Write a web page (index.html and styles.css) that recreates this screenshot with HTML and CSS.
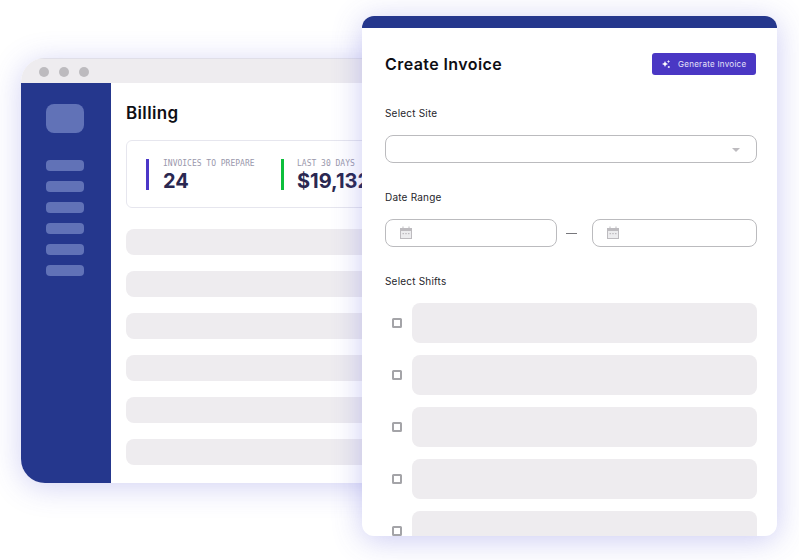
FILE: index.html
```html
<!DOCTYPE html>
<html lang="en">
<head>
<meta charset="utf-8">
<title>Create Invoice</title>
<link rel="stylesheet" href="styles.css">
</head>
<body>
<div class="canvas">
  <section class="billing-window">
    <div class="titlebar"><span class="dot"></span><span class="dot"></span><span class="dot"></span></div>
    <div class="billing-body">
      <nav class="sidebar">
        <div class="logo"></div>
        <div class="nav-list">
          <span class="nav-item"></span><span class="nav-item"></span><span class="nav-item"></span>
          <span class="nav-item"></span><span class="nav-item"></span><span class="nav-item"></span>
        </div>
      </nav>
      <main class="billing-main">
        <h2 class="billing-title">Billing</h2>
        <div class="stats">
          <div class="stat stat-purple">
            <div class="stat-label">INVOICES TO PREPARE</div>
            <div class="stat-value">24</div>
          </div>
          <div class="stat stat-green">
            <div class="stat-label">LAST 30 DAYS</div>
            <div class="stat-value">$19,132</div>
          </div>
        </div>
        <div class="billing-rows">
          <div class="billing-row"></div><div class="billing-row"></div><div class="billing-row"></div>
          <div class="billing-row"></div><div class="billing-row"></div><div class="billing-row"></div>
        </div>
      </main>
    </div>
  </section>

  <section class="invoice-window">
    <div class="invoice-top"></div>
    <div class="invoice-content">
      <header class="invoice-header">
        <h1 class="invoice-title">Create Invoice</h1>
        <div class="generate-btn">
          <svg class="spark" viewBox="0 0 10 10" width="10" height="10"><path d="M4 2 L4.9 4.1 L7 5 L4.9 5.9 L4 8 L3.1 5.9 L1 5 L3.100 4.100 Z" fill="#fff"/><path d="M7.500 .8 L8 2 L9.200 2.500 L8 3 L7.500 4.200 L7 3 L5.800 2.500 L7 2 Z" fill="#e6e3fa"/><circle cx="7.800" cy="8" r="1.100" fill="#e6e3fa"/></svg>
          <span>Generate Invoice</span>
        </div>
      </header>

      <div class="field-label label-site">Select Site</div>
      <div class="select-box"><span class="caret"></span></div>

      <div class="field-label label-date">Date Range</div>
      <div class="date-row">
        <div class="date-input date-first">
          <svg class="calendar" viewBox="0 0 12 13" width="12" height="13"><path d="M0 2 H2.500 V0.500 H3.500 V2 H8.500 V0.500 H9.500 V2 H12 V13 H0 Z" fill="#bdbbbf"/><rect x="1" y="5" width="10" height="7" fill="#ececee"/><rect x="2.500" y="7" width="1.500" height="1.200" fill="#bdbbbf"/><rect x="5.250" y="7" width="1.500" height="1.200" fill="#bdbbbf"/><rect x="8" y="7" width="1.500" height="1.200" fill="#bdbbbf"/></svg>
        </div>
        <span class="date-dash"></span>
        <div class="date-input date-second">
          <svg class="calendar" viewBox="0 0 12 13" width="12" height="13"><path d="M0 2 H2.500 V0.500 H3.500 V2 H8.500 V0.500 H9.500 V2 H12 V13 H0 Z" fill="#bdbbbf"/><rect x="1" y="5" width="10" height="7" fill="#ececee"/><rect x="2.500" y="7" width="1.500" height="1.200" fill="#bdbbbf"/><rect x="5.250" y="7" width="1.500" height="1.200" fill="#bdbbbf"/><rect x="8" y="7" width="1.500" height="1.200" fill="#bdbbbf"/></svg>
        </div>
      </div>

      <div class="field-label label-shifts">Select Shifts</div>
      <div class="shift-list">
        <div class="shift"><span class="check"></span><div class="shift-bar"></div></div>
        <div class="shift"><span class="check"></span><div class="shift-bar"></div></div>
        <div class="shift"><span class="check"></span><div class="shift-bar"></div></div>
        <div class="shift"><span class="check"></span><div class="shift-bar"></div></div>
        <div class="shift"><span class="check"></span><div class="shift-bar"></div></div>
      </div>
    </div>
  </section>
</div>
</body>
</html>
```
FILE: styles.css
```css
* { box-sizing: border-box; }
html, body { margin: 0; padding: 0; background: #fff; }
body { font-family: "Inter", "Liberation Sans", sans-serif; }
.canvas { position: relative; width: 799px; height: 560px; overflow: hidden; }

.billing-window {
  position: absolute; left: 21px; top: 58px; width: 400px; height: 425px;
  background: #fff; border-radius: 24px; overflow: hidden;
  box-shadow: 0 4px 30px rgba(82, 82, 214, .26);
}
.titlebar {
  height: 25px; background: #eeecef; display: flex; align-items: center;
  gap: 10px; padding-left: 18px; padding-top: 1px;
  border-top: 1px solid #e0dfe8;
}
.dot { width: 10px; height: 10px; border-radius: 50%; background: #bdbbbf; }
.billing-body { display: flex; height: 400px; }
.sidebar {
  flex: none; width: 90px; background: #25378d; padding: 21px 0 0 25px;
}
.logo { width: 38px; height: 29px; border-radius: 8px; background: #6172b7; }
.nav-list { display: flex; flex-direction: column; gap: 10px; margin-top: 27px; }
.nav-item { display: block; width: 38px; height: 11px; border-radius: 4px; background: #6172b7; }
.billing-main { flex: 1; padding: 20px 0 0 15px; }
.billing-title {
  margin: 0; font-size: 17px; line-height: 21px; font-weight: 600; color: #0e0e14;
  letter-spacing: .35px;
}
.stats {
  margin-top: 16px; height: 68px; width: 300px; border: 1px solid #e6e6ee; border-radius: 6px;
  display: flex; padding: 18px 0 0 19px;
}
.stat { height: 31px; padding-left: 14px; border-left: 3px solid #4b37c8; }
.stat-purple { flex: none; width: 135px; }
.stat-green { border-left-color: #0dbf3c; flex: none; padding-left: 13px; }
.stat-label {
  font-family: "DejaVu Sans Mono", "Liberation Mono", monospace;
  font-size: 8px; line-height: 10px; color: #9a98ac; white-space: nowrap;
}
.stat-value {
  font-size: 20px; line-height: 24px; font-weight: 700; color: #2a2851; white-space: nowrap;
}
.billing-rows { margin-top: 21px; display: flex; flex-direction: column; gap: 16px; }
.billing-row { height: 26px; border-radius: 8px; background: #eeecef; }

.invoice-window {
  position: absolute; left: 362px; top: 16px; width: 415px; height: 520px;
  background: #fff; border-radius: 12px; overflow: hidden;
  box-shadow: 0 4px 30px rgba(82, 82, 214, .3);
}
.invoice-top { height: 12px; background: #25378d; }
.invoice-content { padding: 25px 20px 0 23px; }
.invoice-header { display: flex; justify-content: space-between; align-items: center; height: 22px; }
.invoice-title { margin: 0; font-size: 16px; line-height: 22px; font-weight: 600; color: #0e0e14; letter-spacing: .42px; }
.generate-btn {
  width: 104px; height: 22px; margin-right: 1px; background: #4a37c4; border-radius: 3px; color: #e6e3fa;
  display: flex; align-items: center; padding-left: 9px; gap: 7px; font-size: 8px; letter-spacing: .27px; white-space: nowrap;
}
.spark { flex: none; }
.field-label { font-size: 10px; line-height: 14px; font-weight: 400; color: #26262c; letter-spacing: .2px; }
.label-site { margin-top: 31px; }
.select-box {
  margin-top: 15px; height: 28px; border: 1px solid #bbbbbe; border-radius: 8px;
  display: flex; align-items: center; justify-content: flex-end; padding-right: 16px;
}
.caret {
  width: 0; height: 0; margin-top: 1px;
  border-left: 4.500px solid transparent; border-right: 4.500px solid transparent; border-top: 4.500px solid #bdbbbf;
}
.label-date { margin-top: 27px; }
.date-row { margin-top: 15px; display: flex; align-items: center; }
.date-input {
  height: 28px; border: 1px solid #bbbbbe; border-radius: 8px;
  display: flex; align-items: center; padding-left: 14px;
}
.calendar { margin-top: -1px; }
.date-first { width: 172px; }
.date-second { width: 165px; }
.date-dash { width: 11px; height: 1px; background: #77777c; margin: 0 15px 0 9px; }
.label-shifts { margin-top: 27px; }
.shift-list { margin-top: 15px; display: flex; flex-direction: column; gap: 12px; }
.shift { display: flex; align-items: center; padding-left: 7px; gap: 10px; flex: none; }
.check { width: 10px; height: 10px; flex: none; border: 2px solid #a4a4a8; border-radius: 1.500px; }
.shift-bar { flex: 1; height: 40px; border-radius: 8px; background: #eeecef; }
```
